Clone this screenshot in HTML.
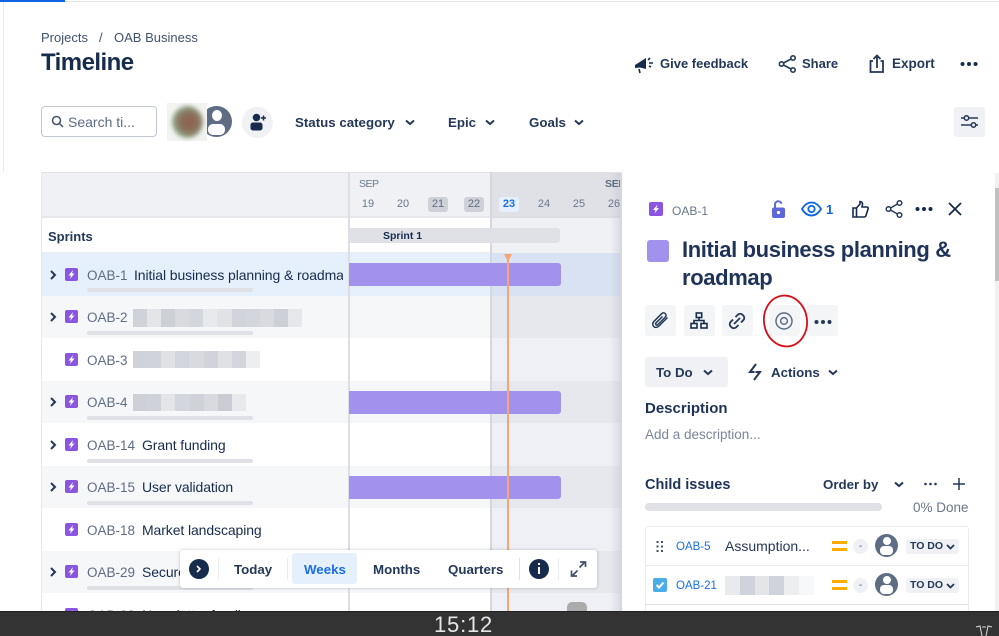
<!DOCTYPE html>
<html><head><meta charset="utf-8">
<style>
html,body{margin:0;padding:0;width:999px;height:636px;overflow:hidden;background:#fff}
body{position:relative;font-family:"Liberation Sans",sans-serif;color:#172b4d;font-size:14px}
.a{position:absolute}
.t{position:absolute;white-space:nowrap;line-height:18px}
.row{position:absolute;left:41px;width:581px}
.ic{position:absolute;left:65px;width:13px;height:13px;background:#8a55e0;border-radius:2px}
.ic svg{display:block}
.chev{position:absolute;left:49px;width:8px;height:10px}
.bar{position:absolute;left:87px;width:166px;height:4px;background:#dfe1e6;border-radius:2px}
.k{position:absolute;left:87px;margin-top:1px;color:#5e6c84;white-space:nowrap;line-height:18px;font-size:13.500px}
.s{position:absolute;white-space:nowrap;line-height:18px;font-size:14px;letter-spacing:-.1px}
.blur{position:absolute;height:18px;display:flex}
.blur i{display:block;height:100%;flex:1}
.bp{position:absolute;left:349px;width:212px;height:23px;background:#a292ee;border-radius:0 3px 3px 0}
.d{position:absolute;top:197px;width:20px;height:15px;line-height:15px;text-align:center;font-size:11px;color:#6b778c;border-radius:3px}
.btn{position:absolute;top:305px;width:31px;height:31px;background:#f4f5f7;border-radius:3px}
svg{overflow:visible}
</style></head><body>

<!-- top strip -->
<div class="a" style="left:0;top:0;width:65px;height:2px;background:#0c66e4"></div>
<div class="a" style="left:65px;top:1px;width:934px;height:1px;background:#e4e6ea"></div>
<div class="a" style="left:3px;top:2px;width:1px;height:170px;background:#ebecf0"></div>

<!-- header -->
<div class="t" style="left:41px;top:29px;color:#42526e;font-size:13px">Projects</div>
<div class="t" style="left:99px;top:29px;color:#42526e;font-size:13px">/</div>
<div class="t" style="left:114px;top:29px;color:#42526e;font-size:13px">OAB Business</div>
<div class="t" style="left:41px;top:50px;font-size:24px;line-height:26px;font-weight:bold;color:#172b4d;letter-spacing:-.55px">Timeline</div>

<svg class="a" style="left:634px;top:55px" width="20" height="20" viewBox="0 0 20 20"><path d="M1 10 L12 3 V14 L6 12.5 L1 13Z" fill="#172b4d"/><path d="M5 14l1 4M14 5l2-2M15 8h4M15 11l2 1" stroke="#172b4d" stroke-width="1.6" fill="none"/></svg>
<div class="t" style="left:660px;top:55px;font-weight:bold;color:#253858;font-size:13px">Give feedback</div>
<svg class="a" style="left:778px;top:55px" width="20" height="18" viewBox="0 0 20 18"><circle cx="3.5" cy="9" r="2.2" fill="none" stroke="#253858" stroke-width="1.6"/><circle cx="15" cy="3" r="2.2" fill="none" stroke="#253858" stroke-width="1.6"/><circle cx="15" cy="15" r="2.2" fill="none" stroke="#253858" stroke-width="1.6"/><path d="M5.500 8 13 4M5.500 10 13 14" stroke="#253858" stroke-width="1.6"/></svg>
<div class="t" style="left:802px;top:55px;font-weight:bold;color:#253858;font-size:13px">Share</div>
<svg class="a" style="left:868px;top:54px" width="18" height="20" viewBox="0 0 18 20"><path d="M5 7H2.500V18H15V7H12.500" fill="none" stroke="#253858" stroke-width="1.800"/><path d="M9 14V2M5.500 5 9 1.500 12.500 5" fill="none" stroke="#253858" stroke-width="1.800"/></svg>
<div class="t" style="left:892px;top:55px;font-weight:bold;color:#253858;font-size:13.500px">Export</div>
<svg class="a" style="left:960px;top:61px" width="18" height="6"><circle cx="2.500" cy="3" r="2" fill="#172b4d"/><circle cx="9" cy="3" r="2" fill="#172b4d"/><circle cx="15.500" cy="3" r="2" fill="#172b4d"/></svg>

<!-- filter bar -->
<div class="a" style="left:41px;top:106px;width:114px;height:29px;border:1px solid #c1c7d0;border-radius:4px"></div>
<svg class="a" style="left:51px;top:115px" width="13" height="13" viewBox="0 0 13 13"><circle cx="5.500" cy="5.500" r="4" fill="none" stroke="#42526e" stroke-width="1.500"/><path d="M8.500 8.500 12 12" stroke="#42526e" stroke-width="1.500"/></svg>
<div class="t" style="left:68px;top:113px;color:#5e6c84;font-size:14px">Search ti...</div>

<div class="a" style="left:201px;top:106px;width:31px;height:31px;border-radius:50%;background:#5e6c84;overflow:hidden">
  <div class="a" style="left:11px;top:4px;width:10px;height:11px;border-radius:50%;background:#fff"></div>
  <div class="a" style="left:7px;top:18px;width:17px;height:11px;border-radius:5px;background:#fff"></div>
</div>
<div class="a" style="left:167px;top:103px;width:40px;height:38px;background:#f3f4f2"></div>
<div class="a" style="left:172px;top:106px;width:31px;height:32px;border-radius:50%;background:radial-gradient(circle at 55% 50%,#8f5f50 0,#8a6f5a 38%,#8fa98a 70%,#dfe5dc 100%);filter:blur(2px)"></div>
<div class="a" style="left:242px;top:107px;width:31px;height:31px;border-radius:50%;background:#f0f1f4"></div>
<svg class="a" style="left:250px;top:113px" width="17" height="18" viewBox="0 0 17 18"><circle cx="6.500" cy="4.500" r="3.800" fill="#172b4d"/><rect x="0.500" y="9.500" width="12" height="8" rx="2.500" fill="#172b4d"/><path d="M11 5h5M13.500 2.500v5" stroke="#172b4d" stroke-width="1.500"/></svg>

<div class="t" style="left:295px;top:114px;font-weight:bold;font-size:13.300px;color:#253858">Status category</div>
<svg class="a" style="left:405px;top:119px" width="10" height="7"><path d="M1 1.500 5 5 9 1.500" fill="none" stroke="#253858" stroke-width="2"/></svg>
<div class="t" style="left:448px;top:114px;font-weight:bold;font-size:13.300px;color:#253858">Epic</div>
<svg class="a" style="left:485px;top:119px" width="10" height="7"><path d="M1 1.500 5 5 9 1.500" fill="none" stroke="#253858" stroke-width="2"/></svg>
<div class="t" style="left:529px;top:114px;font-weight:bold;font-size:13.300px;color:#253858">Goals</div>
<svg class="a" style="left:574px;top:119px" width="10" height="7"><path d="M1 1.500 5 5 9 1.500" fill="none" stroke="#253858" stroke-width="2"/></svg>

<div class="a" style="left:954px;top:107px;width:31px;height:30px;background:#f0f1f4;border-radius:3px"></div>
<svg class="a" style="left:960px;top:114px" width="19" height="16" viewBox="0 0 19 16"><path d="M1 4h3M9 4h9M1 11h10M16 11h2" stroke="#253858" stroke-width="1.600"/><circle cx="6.500" cy="4" r="2.200" fill="none" stroke="#253858" stroke-width="1.500"/><circle cx="13.500" cy="11" r="2.200" fill="none" stroke="#253858" stroke-width="1.500"/></svg>

<!-- table frame -->
<div class="a" style="left:41px;top:172px;width:581px;height:46px;background:#f0f1f4;border-top:1px solid #e0e2e6;border-bottom:2px solid #e5e7ea;box-sizing:border-box"></div>
<div class="a" style="left:491px;top:172px;width:131px;height:46px;background:#e0e1e6;border-bottom:2px solid #dcdde2;box-sizing:border-box"></div>

<!-- row backgrounds -->
<div class="row" style="top:218px;height:35px;background:#fff;border-bottom:1px solid #ebecf0;box-sizing:border-box"></div>
<div class="a" style="left:491px;top:218px;width:131px;height:35px;background:#f0f1f5"></div>
<div class="row" style="top:253px;height:43px;background:#e6f0fd"></div>
<div class="a" style="left:491px;top:253px;width:131px;height:43px;background:#d9e2f2"></div>
<div class="row" style="top:296px;height:42px;background:#f6f7f9"></div>
<div class="a" style="left:491px;top:296px;width:131px;height:42px;background:#e7e8ed"></div>
<div class="a" style="left:491px;top:338px;width:131px;height:43px;background:#eff0f5"></div>
<div class="row" style="top:381px;height:42px;background:#f6f7f9"></div>
<div class="a" style="left:491px;top:381px;width:131px;height:42px;background:#e7e8ed"></div>
<div class="a" style="left:491px;top:423px;width:131px;height:43px;background:#eff0f5"></div>
<div class="row" style="top:466px;height:42px;background:#f6f7f9"></div>
<div class="a" style="left:491px;top:466px;width:131px;height:42px;background:#e7e8ed"></div>
<div class="a" style="left:491px;top:508px;width:131px;height:43px;background:#eff0f5"></div>
<div class="row" style="top:551px;height:42px;background:#f6f7f9"></div>
<div class="a" style="left:491px;top:551px;width:131px;height:42px;background:#e7e8ed"></div>
<div class="a" style="left:491px;top:593px;width:131px;height:18px;background:#eff0f5"></div>
<div class="a" style="left:41px;top:172px;width:1px;height:440px;background:#e7e8ec"></div>

<!-- gridlines -->
<div class="a" style="left:348px;top:172px;width:2px;height:440px;background:#dcdee3"></div>
<div class="a" style="left:490px;top:172px;width:2px;height:440px;background:#d5d7dc"></div>
<div class="a" style="left:610px;top:173px;width:10px;height:438px;background:linear-gradient(90deg,rgba(180,185,200,0),rgba(180,185,200,.35))"></div>

<!-- timeline head -->
<div class="t" style="left:359px;top:175px;font-size:10.500px;color:#6b778c;letter-spacing:-.5px">SEP</div>
<div class="t" style="left:605px;top:175px;font-size:10.500px;color:#5e6c84;font-weight:bold;letter-spacing:-.3px">SEP</div>
<div class="d" style="left:358px">19</div>
<div class="d" style="left:393px">20</div>
<div class="d" style="left:428px;background:#ced1d7;color:#5e6c84">21</div>
<div class="d" style="left:464px;background:#ced1d7;color:#5e6c84">22</div>
<div class="d" style="left:499px;background:#e6f0fd;color:#1a6ee8;font-weight:bold">23</div>
<div class="d" style="left:534px">24</div>
<div class="d" style="left:569px">25</div>
<div class="d" style="left:604px">26</div>

<!-- sprint -->
<div class="a" style="left:349px;top:228px;width:211px;height:15px;background:#dfe1e6;border-radius:0 3px 3px 0"></div>
<div class="t" style="left:383px;top:227px;font-size:10.500px;font-weight:bold;color:#172b4d">Sprint 1</div>
<div class="t" style="left:48px;top:228px;font-size:13px;font-weight:bold;color:#253858">Sprints</div>

<!-- bars -->
<div class="bp" style="top:263px"></div>
<div class="bp" style="top:391px"></div>
<div class="bp" style="top:476px"></div>
<div class="a" style="left:567px;top:602px;width:20px;height:9px;background:#ababab;border-radius:5px 5px 0 0"></div>

<!-- today line -->
<div class="a" style="left:507px;top:254px;width:2px;height:358px;background:#f6a673"></div>
<svg class="a" style="left:504px;top:254px" width="8" height="8"><path d="M0 0H8L4 8Z" fill="#f6a673"/></svg>

<!-- left rows -->
<svg class="chev" style="top:270px" viewBox="0 0 8 10"><path d="M2 1 6 5 2 9" fill="none" stroke="#253858" stroke-width="2"/></svg>
<div class="ic" style="top:268px"><svg width="13" height="13" viewBox="0 0 13 13"><path d="M8 2 3.500 7.500H6L5 11 9.500 5.500H7Z" fill="#fff"/></svg></div>
<div class="k" style="top:266px">OAB-1</div>
<div class="s" style="left:134px;top:266px;width:209px;overflow:hidden">Initial business planning &amp; roadmap</div>
<div class="bar" style="top:288px"></div>

<svg class="chev" style="top:312px" viewBox="0 0 8 10"><path d="M2 1 6 5 2 9" fill="none" stroke="#253858" stroke-width="2"/></svg>
<div class="ic" style="top:310px"><svg width="13" height="13" viewBox="0 0 13 13"><path d="M8 2 3.500 7.500H6L5 11 9.500 5.500H7Z" fill="#fff"/></svg></div>
<div class="k" style="top:308px">OAB-2</div>
<div class="blur" style="left:133px;top:309px;width:169px"><i style="background:#cfd2d9"></i><i style="background:#e4e5e9"></i><i style="background:#cdd0d7"></i><i style="background:#d8dadf"></i><i style="background:#d3d6dc"></i><i style="background:#e8e9ec"></i><i style="background:#e0e2e6"></i><i style="background:#d1d4da"></i><i style="background:#d3d6dc"></i><i style="background:#d8dadf"></i><i style="background:#cdd0d7"></i><i style="background:#e6e7ea"></i></div>
<div class="bar" style="top:331px"></div>

<div class="ic" style="top:353px"><svg width="13" height="13" viewBox="0 0 13 13"><path d="M8 2 3.500 7.500H6L5 11 9.500 5.500H7Z" fill="#fff"/></svg></div>
<div class="k" style="top:351px">OAB-3</div>
<div class="blur" style="left:133px;top:351px;width:127px;height:17px"><i style="background:#cfd2d9"></i><i style="background:#d0d3d9"></i><i style="background:#dfe1e5"></i><i style="background:#d2d5db"></i><i style="background:#d8dadf"></i><i style="background:#d0d3da"></i><i style="background:#dfe1e5"></i><i style="background:#d2d5db"></i><i style="background:#eceef0"></i></div>

<svg class="chev" style="top:397px" viewBox="0 0 8 10"><path d="M2 1 6 5 2 9" fill="none" stroke="#253858" stroke-width="2"/></svg>
<div class="ic" style="top:395px"><svg width="13" height="13" viewBox="0 0 13 13"><path d="M8 2 3.500 7.500H6L5 11 9.500 5.500H7Z" fill="#fff"/></svg></div>
<div class="k" style="top:393px">OAB-4</div>
<div class="blur" style="left:133px;top:394px;width:113px;height:17px"><i style="background:#cdd0d7"></i><i style="background:#cfd2d9"></i><i style="background:#e4e5e9"></i><i style="background:#d3d6dc"></i><i style="background:#cfd2d9"></i><i style="background:#d8dadf"></i><i style="background:#c9ccd3"></i><i style="background:#e8e9ec"></i></div>
<div class="bar" style="top:416px"></div>

<svg class="chev" style="top:440px" viewBox="0 0 8 10"><path d="M2 1 6 5 2 9" fill="none" stroke="#253858" stroke-width="2"/></svg>
<div class="ic" style="top:438px"><svg width="13" height="13" viewBox="0 0 13 13"><path d="M8 2 3.500 7.500H6L5 11 9.500 5.500H7Z" fill="#fff"/></svg></div>
<div class="k" style="top:436px">OAB-14</div>
<div class="s" style="left:142px;top:436px">Grant funding</div>
<div class="bar" style="top:459px"></div>

<svg class="chev" style="top:482px" viewBox="0 0 8 10"><path d="M2 1 6 5 2 9" fill="none" stroke="#253858" stroke-width="2"/></svg>
<div class="ic" style="top:480px"><svg width="13" height="13" viewBox="0 0 13 13"><path d="M8 2 3.500 7.500H6L5 11 9.500 5.500H7Z" fill="#fff"/></svg></div>
<div class="k" style="top:478px">OAB-15</div>
<div class="s" style="left:142px;top:478px">User validation</div>
<div class="bar" style="top:501px"></div>

<div class="ic" style="top:523px"><svg width="13" height="13" viewBox="0 0 13 13"><path d="M8 2 3.500 7.500H6L5 11 9.500 5.500H7Z" fill="#fff"/></svg></div>
<div class="k" style="top:521px">OAB-18</div>
<div class="s" style="left:142px;top:521px">Market landscaping</div>

<svg class="chev" style="top:567px" viewBox="0 0 8 10"><path d="M2 1 6 5 2 9" fill="none" stroke="#253858" stroke-width="2"/></svg>
<div class="ic" style="top:565px"><svg width="13" height="13" viewBox="0 0 13 13"><path d="M8 2 3.500 7.500H6L5 11 9.500 5.500H7Z" fill="#fff"/></svg></div>
<div class="k" style="top:563px">OAB-29</div>
<div class="s" style="left:142px;top:563px">Secure seed funding</div>
<div class="bar" style="top:586px"></div>

<div class="ic" style="top:608px"><svg width="13" height="13" viewBox="0 0 13 13"><path d="M8 2 3.500 7.500H6L5 11 9.500 5.500H7Z" fill="#fff"/></svg></div>
<div class="k" style="top:606px">OAB-33</div>
<div class="s" style="left:142px;top:606px">Newsletter funding</div>

<!-- floating toolbar -->
<div class="a" style="left:180px;top:550px;width:417px;height:38px;background:#fff;border-radius:3px;box-shadow:0 0 3px rgba(9,30,66,.25)"></div>
<div class="a" style="left:189px;top:559px;width:20px;height:20px;border-radius:50%;background:#172b4d"></div>
<svg class="a" style="left:196px;top:565px" width="6" height="8"><path d="M1 1 4 4 1 7" fill="none" stroke="#fff" stroke-width="1.600"/></svg>
<div class="a" style="left:218px;top:558px;width:1px;height:22px;background:#ebecf0"></div>
<div class="t" style="left:234px;top:561px;font-weight:bold;font-size:13.300px;color:#253858">Today</div>
<div class="a" style="left:287px;top:558px;width:1px;height:22px;background:#ebecf0"></div>
<div class="a" style="left:292px;top:553px;width:65px;height:31px;background:#e6f0fd;border-radius:3px"></div>
<div class="t" style="left:304px;top:561px;font-weight:bold;font-size:13.300px;color:#1a6ee8">Weeks</div>
<div class="t" style="left:373px;top:561px;font-weight:bold;font-size:13.300px;color:#253858">Months</div>
<div class="t" style="left:448px;top:561px;font-weight:bold;font-size:13.300px;color:#253858">Quarters</div>
<div class="a" style="left:519px;top:558px;width:1px;height:22px;background:#dfe1e6"></div>
<div class="a" style="left:529px;top:559px;width:20px;height:20px;border-radius:50%;background:#172b4d"></div>
<div class="a" style="left:538px;top:563px;width:2px;height:2px;background:#fff"></div>
<div class="a" style="left:538px;top:567px;width:2px;height:7px;background:#fff"></div>
<div class="a" style="left:558px;top:558px;width:1px;height:22px;background:#ebecf0"></div>
<svg class="a" style="left:570px;top:561px" width="17" height="16" viewBox="0 0 17 16"><path d="M9.500 6.500 15 1M10 1H15.500V6M7.500 9.500 2 15M1.500 9.500V15H7" fill="none" stroke="#42526e" stroke-width="1.700"/></svg>

<!-- details panel -->
<div class="a" style="left:620px;top:173px;width:379px;height:438px;background:#fff;border-left:2px solid #d5d8e0;box-sizing:border-box"></div>
<div class="a" style="left:995px;top:173px;width:4px;height:438px;background:#f1f1f1"></div>
<div class="a" style="left:995px;top:188px;width:4px;height:93px;background:#c1c1c1"></div>

<div class="a" style="left:649px;top:202px;width:14px;height:14px;background:#8a55e0;border-radius:2px"></div>
<svg class="a" style="left:649px;top:202px" width="14" height="14" viewBox="0 0 14 14"><path d="M8.500 2.500 4 8H6.500L5.500 11.500 10 6H7.500Z" fill="#fff"/></svg>
<div class="t" style="left:672px;top:202px;font-size:12px;color:#6b778c">OAB-1</div>

<svg class="a" style="left:771px;top:199px" width="15" height="20" viewBox="0 0 15 20"><path d="M4 9V5.500a3.300 3.300 0 0 1 6.500-.8" fill="none" stroke="#5f68d8" stroke-width="2"/><rect x="1" y="8.500" width="13" height="10.500" rx="2" fill="#5f68d8"/><circle cx="7.500" cy="13.500" r="1.600" fill="#fff"/></svg>
<svg class="a" style="left:801px;top:201px" width="21" height="16" viewBox="0 0 21 16"><path d="M1 8C4 3 7 1.500 10.500 1.500S17 3 20 8C17 13 14 14.500 10.500 14.500S4 13 1 8Z" fill="none" stroke="#0c66e4" stroke-width="1.800"/><circle cx="10.500" cy="8" r="3.200" fill="none" stroke="#0c66e4" stroke-width="1.800"/></svg>
<div class="t" style="left:826px;top:201px;font-size:13px;font-weight:bold;color:#0c66e4">1</div>
<svg class="a" style="left:852px;top:200px" width="17" height="18" viewBox="0 0 17 18"><path d="M1 8H4.500V17H1ZM4.500 8 8 4V1.500C10 1.500 10.500 3 10.500 4.500L10 7H15C16 7 16.500 8 16 9L14 15.500C13.700 16.500 13 17 12 17H4.500" fill="none" stroke="#172b4d" stroke-width="1.600"/></svg>
<svg class="a" style="left:885px;top:200px" width="18" height="18" viewBox="0 0 18 18"><circle cx="3.500" cy="9" r="2.300" fill="none" stroke="#253858" stroke-width="1.500"/><circle cx="14.500" cy="3" r="2.300" fill="none" stroke="#253858" stroke-width="1.500"/><circle cx="14.500" cy="15" r="2.300" fill="none" stroke="#253858" stroke-width="1.500"/><path d="M5.500 8 12.500 4M5.500 10 12.500 14" stroke="#253858" stroke-width="1.500"/></svg>
<svg class="a" style="left:915px;top:206px" width="18" height="6"><circle cx="2.500" cy="3" r="2" fill="#172b4d"/><circle cx="9" cy="3" r="2" fill="#172b4d"/><circle cx="15.500" cy="3" r="2" fill="#172b4d"/></svg>
<svg class="a" style="left:948px;top:202px" width="14" height="14"><path d="M1 1 13 13M13 1 1 13" stroke="#172b4d" stroke-width="1.800"/></svg>

<div class="a" style="left:647px;top:240px;width:22px;height:22px;background:#a292ee;border-radius:3px"></div>
<div class="t" style="left:682px;top:236px;font-size:22px;line-height:27.500px;font-weight:bold;color:#1f3358;width:300px;white-space:normal;letter-spacing:-.37px">Initial business planning &amp;<br>roadmap</div>

<div class="btn" style="left:645px"></div>
<div class="btn" style="left:684px"></div>
<div class="btn" style="left:722px"></div>
<div class="btn" style="left:769px"></div>
<div class="btn" style="left:807px"></div>

<svg class="a" style="left:651px;top:311px" width="19" height="19" viewBox="0 0 19 19"><path d="M16.500 6.500 8 15c-1.800 1.800-4 1.800-5.300.5S1.300 12 3 10.300L10.500 2.800c1.200-1.200 2.800-1.200 3.800-.2s1 2.600-.2 3.800L7 13.500c-.7.700-1.500.7-2 .2s-.5-1.300.2-2L11.500 5.500" fill="none" stroke="#253858" stroke-width="1.500"/></svg>
<svg class="a" style="left:690px;top:312px" width="18" height="17" viewBox="0 0 18 17"><rect x="6.300" y="1" width="5.400" height="4.500" fill="none" stroke="#172b4d" stroke-width="1.600"/><rect x="1" y="11.500" width="6" height="4.500" fill="none" stroke="#172b4d" stroke-width="1.600"/><rect x="11" y="11.500" width="6" height="4.500" fill="none" stroke="#172b4d" stroke-width="1.600"/><path d="M9 5.500V8.500M4 11.500V8.500H14V11.500" fill="none" stroke="#172b4d" stroke-width="1.600"/></svg>
<svg class="a" style="left:728px;top:312px" width="18" height="18" viewBox="0 0 18 18"><path d="M7.500 5 9.800 2.700a3.300 3.300 0 0 1 4.700 0l.8.800a3.300 3.300 0 0 1 0 4.700L13 10.500M10.500 13 8.200 15.300a3.300 3.300 0 0 1-4.700 0l-.8-.8a3.300 3.300 0 0 1 0-4.700L5 7.500M6 12l6-6" fill="none" stroke="#253858" stroke-width="1.800"/></svg>
<svg class="a" style="left:775px;top:312px" width="18" height="18" viewBox="0 0 18 18"><circle cx="9" cy="9" r="8" fill="none" stroke="#5e6c84" stroke-width="1.500"/><circle cx="9" cy="9" r="3.400" fill="none" stroke="#5e6c84" stroke-width="1.500"/></svg>
<svg class="a" style="left:814px;top:319px" width="18" height="6"><circle cx="2.500" cy="3" r="2" fill="#253858"/><circle cx="9" cy="3" r="2" fill="#253858"/><circle cx="15.500" cy="3" r="2" fill="#253858"/></svg>
<!-- red ring -->
<svg class="a" style="left:760px;top:293px" width="52" height="56" viewBox="0 0 52 56"><ellipse cx="25.500" cy="28" rx="21.500" ry="25.500" fill="none" stroke="#d9101a" stroke-width="1.800" transform="rotate(-8 25.500 28)"/></svg>

<div class="a" style="left:645px;top:357px;width:83px;height:30px;background:#f0f1f4;border-radius:3px"></div>
<div class="t" style="left:656px;top:364px;font-weight:bold;font-size:13.300px;color:#253858">To Do</div>
<svg class="a" style="left:703px;top:369px" width="10" height="7"><path d="M1 1.500 5 5 9 1.500" fill="none" stroke="#253858" stroke-width="2"/></svg>
<svg class="a" style="left:748px;top:363px" width="14" height="18" viewBox="0 0 14 18"><path d="M8 1 2 9H6.500M6 17 12 9H7.500" fill="none" stroke="#253858" stroke-width="2"/></svg>
<div class="t" style="left:771px;top:364px;font-weight:bold;font-size:13.300px;color:#253858">Actions</div>
<svg class="a" style="left:828px;top:369px" width="10" height="7"><path d="M1 1.500 5 5 9 1.500" fill="none" stroke="#253858" stroke-width="2"/></svg>

<div class="t" style="left:645px;top:400px;font-size:15px;font-weight:bold;color:#1f3358">Description</div>
<div class="t" style="left:645px;top:426px;font-size:13.500px;color:#7a869a">Add a description...</div>

<div class="t" style="left:645px;top:476px;font-size:14.500px;font-weight:bold;color:#1f3358">Child issues</div>
<div class="t" style="left:823px;top:476px;font-size:13.300px;font-weight:bold;color:#253858">Order by</div>
<svg class="a" style="left:894px;top:481px" width="10" height="7"><path d="M1 1.500 5 5 9 1.500" fill="none" stroke="#253858" stroke-width="2"/></svg>
<svg class="a" style="left:924px;top:482px" width="13" height="4"><circle cx="1.500" cy="2" r="1.300" fill="#253858"/><circle cx="6.500" cy="2" r="1.300" fill="#253858"/><circle cx="11.500" cy="2" r="1.300" fill="#253858"/></svg>
<svg class="a" style="left:953px;top:478px" width="12" height="12"><path d="M6 0V12M0 6H12" stroke="#253858" stroke-width="1.500"/></svg>
<div class="a" style="left:645px;top:503px;width:237px;height:8px;background:#dfe1e6;border-radius:4px"></div>
<div class="t" style="left:913px;top:499px;font-size:13.500px;color:#6b778c">0% Done</div>

<!-- child issues table -->
<div class="a" style="left:645px;top:526px;width:324px;height:90px;border:1px solid #ebecf0;border-radius:3px;box-sizing:border-box"></div>
<div class="a" style="left:645px;top:565px;width:324px;height:1px;background:#ebecf0"></div>
<div class="a" style="left:645px;top:604px;width:324px;height:1px;background:#dfe1e6"></div>

<svg class="a" style="left:656px;top:541px" width="8" height="11"><g fill="#42526e"><rect x="0.500" y="0" width="2" height="2"/><rect x="5" y="0" width="2" height="2"/><rect x="0.500" y="4.500" width="2" height="2"/><rect x="5" y="4.500" width="2" height="2"/><rect x="0.500" y="9" width="2" height="2"/><rect x="5" y="9" width="2" height="2"/></g></svg>
<div class="t" style="left:676px;top:538px;font-size:11.500px;color:#1a6ee8">OAB-5</div>
<div class="t" style="left:725px;top:537px;font-size:14px;color:#253858">Assumption...</div>
<div class="a" style="left:832px;top:541px;width:15px;height:3px;background:#ffab00"></div>
<div class="a" style="left:832px;top:548px;width:15px;height:3px;background:#ffab00"></div>
<div class="a" style="left:853px;top:539px;width:15px;height:15px;border-radius:50%;background:#f0f1f4;text-align:center;font-size:10px;line-height:15px;color:#42526e">-</div>
<div class="a" style="left:875px;top:534px;width:23px;height:23px;border-radius:50%;background:#5e6c84;overflow:hidden"><div class="a" style="left:7.500px;top:3px;width:8px;height:8px;border-radius:50%;background:#fff"></div><div class="a" style="left:5px;top:12px;width:13px;height:9px;border-radius:4px;background:#fff"></div></div>
<div class="a" style="left:906px;top:539px;width:53px;height:15px;background:#f0f1f4;border-radius:3px"></div>
<div class="t" style="left:910px;top:537px;font-size:10.500px;font-weight:bold;color:#253858">TO DO</div>
<svg class="a" style="left:946px;top:544px" width="9" height="6"><path d="M1 1 4.500 4.500 8 1" fill="none" stroke="#253858" stroke-width="1.800"/></svg>

<div class="a" style="left:653px;top:578px;width:14px;height:14px;background:#4bade8;border-radius:2px"></div>
<svg class="a" style="left:653px;top:578px" width="14" height="14"><path d="M3.500 7 6 9.500 10.500 4.500" fill="none" stroke="#fff" stroke-width="2"/></svg>
<div class="t" style="left:676px;top:577px;font-size:11.500px;color:#1a6ee8">OAB-21</div>
<div class="blur" style="left:725px;top:576px;width:89px;height:19px"><i style="background:#e9eaee"></i><i style="background:#d0d3db"></i><i style="background:#e4e5e9"></i><i style="background:#d0d3db"></i><i style="background:#eceef0"></i><i style="background:#f7f8f9"></i></div>
<div class="a" style="left:832px;top:580px;width:15px;height:3px;background:#ffab00"></div>
<div class="a" style="left:832px;top:587px;width:15px;height:3px;background:#ffab00"></div>
<div class="a" style="left:853px;top:578px;width:15px;height:15px;border-radius:50%;background:#f0f1f4;text-align:center;font-size:10px;line-height:15px;color:#42526e">-</div>
<div class="a" style="left:875px;top:573px;width:23px;height:23px;border-radius:50%;background:#5e6c84;overflow:hidden"><div class="a" style="left:7.500px;top:3px;width:8px;height:8px;border-radius:50%;background:#fff"></div><div class="a" style="left:5px;top:12px;width:13px;height:9px;border-radius:4px;background:#fff"></div></div>
<div class="a" style="left:906px;top:578px;width:53px;height:15px;background:#f0f1f4;border-radius:3px"></div>
<div class="t" style="left:910px;top:576px;font-size:10.500px;font-weight:bold;color:#253858">TO DO</div>
<svg class="a" style="left:946px;top:583px" width="9" height="6"><path d="M1 1 4.500 4.500 8 1" fill="none" stroke="#253858" stroke-width="1.800"/></svg>

<!-- bottom OS bar -->
<div class="a" style="left:0;top:611px;width:999px;height:25px;background:#333;border-top:1px solid #222;box-sizing:border-box"></div>
<div class="t" style="left:434px;top:613px;font-size:22px;line-height:24px;color:#e6e6e6;letter-spacing:.8px">15:12</div>
<svg class="a" style="left:975px;top:625px" width="18" height="11" viewBox="0 0 18 11"><path d="M1 2 5 1 7 11M17 2 13 1 11 11M7 2h4" fill="none" stroke="#ddd" stroke-width="1"/></svg>

</body></html>
